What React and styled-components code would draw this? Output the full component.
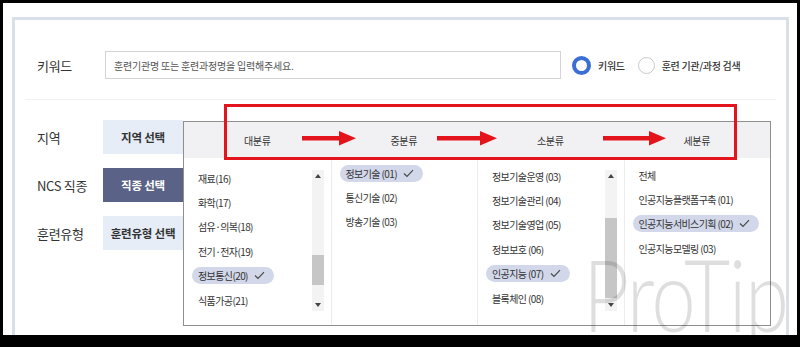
import React from "react";
import styled, { createGlobalStyle } from "styled-components";

const Global = createGlobalStyle`
  html, body { margin: 0; padding: 0; background: #000; }
  body { font-family: "Noto Sans CJK KR", "Noto Sans", sans-serif; }
  * { box-sizing: border-box; }
`;

const Frame = styled.div`
  width: 800px;
  height: 347px;
  background: #000;
  padding: 3px 3px 12px 3px;
`;

const Screen = styled.div`
  position: relative;
  height: 100%;
  background: #fff;
  overflow: hidden;
  padding: 14px 8px 0 9px;
`;

const Panel = styled.div`
  position: relative;
  height: 360px;
  border: 3px solid #d9e0ea;
  border-bottom: none;
`;

const KeywordSection = styled.div`
  margin: 0 10px;
  padding: 31px 0 20px 12px;
  border-bottom: 1px solid #f1f1f1;
  display: flex;
  align-items: center;
`;

const Label = styled.div`
  width: 66px;
  flex: none;
  font-size: 13px;
  color: #333;
  letter-spacing: -0.3px;
`;

const SearchInput = styled.div`
  width: 456px;
  height: 28px;
  margin-left: 2px;
  border: 1px solid #d4d4d4;
  display: flex;
  align-items: center;
  padding-left: 8px;
  font-size: 10px;
  color: #555;
  letter-spacing: -0.2px;
`;

const RadioGroup = styled.div`
  display: flex;
  align-items: center;
  margin-left: 11px;
`;

const RadioItem = styled.label`
  display: flex;
  align-items: center;
  gap: 7px;
  margin-right: 13px;
  font-size: 10px;
  color: #333;
  font-weight: 500;
  letter-spacing: -0.3px;
`;

const RadioDot = styled.span`
  width: ${(p) => (p.$on ? 19 : 17)}px;
  height: ${(p) => (p.$on ? 19 : 17)}px;
  border-radius: 50%;
  background: #fff;
  border: ${(p) => (p.$on ? "4.5px solid #3b6fd4" : "1px solid #c9c9c9")};
  flex: none;
`;

const FilterRows = styled.div`
  display: flex;
  flex-direction: column;
  gap: 14px;
  padding: 20px 0 0 22px;
`;

const FilterRow = styled.div`
  display: flex;
  align-items: center;
`;

const SelectButton = styled.div`
  width: 80px;
  height: 34px;
  display: flex;
  align-items: center;
  justify-content: center;
  font-size: 11.5px;
  font-weight: 700;
  letter-spacing: -0.2px;
  background: ${(p) => (p.$active ? "#5a6287" : "#e6edf7")};
  color: ${(p) => (p.$active ? "#fff" : "#333")};
`;

const Dropdown = styled.div`
  position: absolute;
  left: 168px;
  top: 101px;
  width: 588px;
  height: 205px;
  background: #fff;
  border: 1px solid #8f8f8f;
  display: flex;
  flex-direction: column;
`;

const HeaderRow = styled.div`
  height: 36px;
  background: #f1f1f3;
  display: grid;
  grid-template-columns: repeat(4, 1fr);
  align-items: center;
`;

const HeaderCell = styled.div`
  text-align: center;
  font-size: 10px;
  color: #333;
  letter-spacing: -0.3px;
`;

const Body = styled.div`
  flex: 1;
  display: grid;
  grid-template-columns: repeat(4, 1fr);
  min-height: 0;
`;

const Column = styled.div`
  display: flex;
  border-left: ${(p) => (p.$first ? "none" : "1px solid #ececec")};
  overflow: hidden;
`;

const List = styled.ul`
  flex: 1;
  list-style: none;
  margin: 0;
  padding: ${(p) => p.$top}px 0 0 8px;
`;

const Item = styled.li`
  height: 24.4px;
  display: flex;
  align-items: center;
`;

const ItemText = styled.span`
  display: inline-flex;
  align-items: center;
  gap: 6px;
  height: 17px;
  padding: 0 ${(p) => (p.$chip ? 9 : 6)}px 0 6px;
  border-radius: 9px;
  background: ${(p) => (p.$chip ? "#d2d8ea" : "transparent")};
  font-size: 10px;
  color: #333;
  white-space: nowrap;
  letter-spacing: -0.6px;
`;

const Scrollbar = styled.div`
  width: 12px;
  margin: 12px 7px 14px 0;
  background: #f3f3f3;
  display: flex;
  flex-direction: column;
  flex: none;
`;

const ScrollArrow = styled.div`
  height: 12px;
  display: flex;
  align-items: center;
  justify-content: center;
  flex: none;
`;

const Track = styled.div`
  flex: 1;
  position: relative;
`;

const Thumb = styled.div`
  position: absolute;
  left: 0;
  right: 0;
  top: ${(p) => p.$top}px;
  height: ${(p) => p.$h}px;
  background: #c6c6c6;
`;

const Annotation = styled.div`
  position: absolute;
  left: 209px;
  top: 84px;
  width: 513px;
  height: 56px;
  border: 3px solid #e3141c;
  pointer-events: none;
`;

const ArrowWrap = styled.div`
  position: absolute;
  left: ${(p) => p.$x}px;
  top: 110px;
  line-height: 0;
  pointer-events: none;
`;

const Watermark = styled.div`
  position: absolute;
  left: 580px;
  top: 230px;
  font-family: Lato, "Open Sans", sans-serif;
  font-weight: 300;
  font-size: 100px;
  letter-spacing: -2px;
  transform: scaleX(0.8);
  transform-origin: left top;
  color: rgba(0, 0, 0, 0.13);
  pointer-events: none;
  white-space: nowrap;
`;

const Check = () => (
  <svg width="11" height="9" viewBox="0 0 11 9">
    <path d="M1 4.5 L4 7.5 L10 1.2" fill="none" stroke="#4a4a4a" strokeWidth="1.2" />
  </svg>
);

const Tri = ({ up }) => (
  <svg width="6" height="4" viewBox="0 0 6 4">
    <path d={up ? "M0 4 L3 0 L6 4 Z" : "M0 0 L6 0 L3 4 Z"} fill="#444" />
  </svg>
);

const RedArrow = ({ w }) => (
  <svg width={w} height="16" viewBox={`0 0 ${w} 16`}>
    <rect x="0" y="6" width={w - 14} height="4.5" fill="#e3141c" />
    <path d={`M${w - 17} 1 L${w} 8.2 L${w - 17} 15.4 Z`} fill="#e3141c" />
  </svg>
);

const columns = [
  {
    top: 8,
    items: ["재료(16)", "화학(17)", "섬유·의복(18)", "전기·전자(19)", "정보통신(20)", "식품가공(21)"],
    chip: 4,
    scroll: { top: 73, h: 30 },
  },
  {
    top: 3,
    items: ["정보기술 (01)", "통신기술 (02)", "방송기술 (03)"],
    chip: 0,
  },
  {
    top: 6,
    items: ["정보기술운영 (03)", "정보기술관리 (04)", "정보기술영업 (05)", "정보보호 (06)", "인공지능 (07)", "블록체인 (08)"],
    chip: 4,
    scroll: { top: 36, h: 80 },
  },
  {
    top: 5,
    items: ["전체", "인공지능플랫폼구축 (01)", "인공지능서비스기획 (02)", "인공지능모델링 (03)"],
    chip: 2,
  },
];

const headers = ["대분류", "중분류", "소분류", "세분류"];

export default function App() {
  return (
    <>
      <Global />
      <Frame>
        <Screen>
          <Panel>
            <KeywordSection>
              <Label>키워드</Label>
              <SearchInput>훈련기관명 또는 훈련과정명을 입력해주세요.</SearchInput>
              <RadioGroup>
                <RadioItem>
                  <RadioDot $on />
                  키워드
                </RadioItem>
                <RadioItem>
                  <RadioDot />
                  훈련 기관/과정 검색
                </RadioItem>
              </RadioGroup>
            </KeywordSection>

            <FilterRows>
              <FilterRow>
                <Label>지역</Label>
                <SelectButton>지역 선택</SelectButton>
              </FilterRow>
              <FilterRow>
                <Label>NCS 직종</Label>
                <SelectButton $active>직종 선택</SelectButton>
              </FilterRow>
              <FilterRow>
                <Label>훈련유형</Label>
                <SelectButton>훈련유형 선택</SelectButton>
              </FilterRow>
            </FilterRows>

            <Dropdown>
              <HeaderRow>
                {headers.map((h) => (
                  <HeaderCell key={h}>{h}</HeaderCell>
                ))}
              </HeaderRow>
              <Body>
                {columns.map((col, ci) => (
                  <Column key={ci} $first={ci === 0}>
                    <List $top={col.top}>
                      {col.items.map((it, i) => (
                        <Item key={it}>
                          <ItemText $chip={i === col.chip}>
                            {it}
                            {i === col.chip && <Check />}
                          </ItemText>
                        </Item>
                      ))}
                    </List>
                    {col.scroll && (
                      <Scrollbar>
                        <ScrollArrow>
                          <Tri up />
                        </ScrollArrow>
                        <Track>
                          <Thumb $top={col.scroll.top} $h={col.scroll.h} />
                        </Track>
                        <ScrollArrow>
                          <Tri />
                        </ScrollArrow>
                      </Scrollbar>
                    )}
                  </Column>
                ))}
              </Body>
            </Dropdown>

            <Annotation />
            <ArrowWrap $x={287}>
              <RedArrow w={54} />
            </ArrowWrap>
            <ArrowWrap $x={422}>
              <RedArrow w={60} />
            </ArrowWrap>
            <ArrowWrap $x={588}>
              <RedArrow w={63} />
            </ArrowWrap>
          </Panel>
          <Watermark>ProTip</Watermark>
        </Screen>
      </Frame>
    </>
  );
}
